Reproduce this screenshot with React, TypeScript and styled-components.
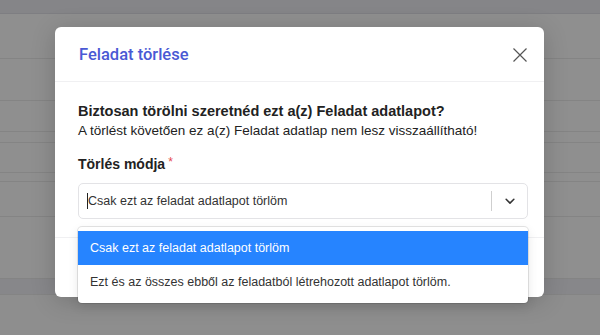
import React from 'react';
import styled, { createGlobalStyle } from 'styled-components';

const GlobalStyle = createGlobalStyle`
  html, body {
    margin: 0;
    padding: 0;
    width: 600px;
    height: 335px;
    overflow: hidden;
    background: #8e8e8e;
  }
  * {
    box-sizing: border-box;
  }
`;

// Background (dimmed table behind the modal)
const Page = styled.div`
  position: relative;
  width: 600px;
  height: 335px;
  font-family: 'Liberation Sans', Arial, sans-serif;
  background: #8e8e8e;
  overflow: hidden;
`;

const TopBar = styled.div`
  height: 14px;
  background: #858588;
  border-bottom: 1px solid #7e7e82;
`;

const Row = styled.div<{ $h: number; $dark?: boolean }>`
  height: ${(p) => p.$h}px;
  background: ${(p) => (p.$dark ? '#87878a' : '#8f8f8f')};
  border-bottom: 1px solid #848484;
`;

// Modal
const Overlay = styled.div`
  position: absolute;
  inset: 0;
  display: flex;
  justify-content: center;
  align-items: flex-start;
  padding-top: 27px;
`;

const Modal = styled.div`
  width: 489px;
  height: 270px;
  margin-left: -1px;
  background: #fff;
  border-radius: 6px;
  box-shadow: 0 4px 24px rgba(0, 0, 0, 0.18);
  display: flex;
  flex-direction: column;
`;

const Header = styled.div`
  height: 55px;
  padding: 1px 16px 0 24px;
  display: flex;
  align-items: center;
  justify-content: space-between;
  border-bottom: 1px solid #f0f0f2;
`;

const Title = styled.h2`
  margin: 0;
  font-family: Roboto, 'Liberation Sans', Arial, sans-serif;
  font-size: 16.5px;
  font-weight: 500;
  color: #4a59d4;
`;

const CloseButton = styled.button`
  width: 16px;
  height: 16px;
  padding: 0;
  border: none;
  background: none;
  display: flex;
  align-items: center;
  justify-content: center;
  cursor: pointer;
`;

const Body = styled.div`
  padding: 19px 16px 18px 23px;
  color: #222;
  font-size: 13.5px;
  line-height: 20px;
`;

const Question = styled.div`
  font-size: 14.5px;
  font-weight: 700;
`;

const Label = styled.div`
  margin-top: 11px;
  font-size: 14px;
  font-weight: 700;
`;

const Required = styled.span`
  color: #e5484d;
  font-weight: 400;
  font-size: 12px;
  vertical-align: 3px;
  margin-left: 3px;
`;

const SelectWrap = styled.div`
  position: relative;
  margin-top: 9px;
`;

const Control = styled.div`
  height: 36px;
  border: 1px solid #e3e3e6;
  border-radius: 5px;
  display: flex;
  align-items: center;
  font-size: 12.5px;
  color: #333;
`;

const Value = styled.div`
  flex: 1;
  padding-left: 8px;
  display: flex;
  align-items: center;
`;

const Caret = styled.span`
  display: inline-block;
  width: 1px;
  height: 16px;
  background: #222;
`;

const Separator = styled.span`
  width: 1px;
  height: 20px;
  background: #cfcfcf;
`;

const Indicator = styled.div`
  width: 35px;
  display: flex;
  align-items: center;
  justify-content: center;
`;

const Menu = styled.div`
  position: absolute;
  top: 44px;
  left: 0;
  right: 0;
  padding: 4px 0;
  background: #fff;
  border-radius: 4px;
  box-shadow: 0 0 0 1px rgba(0, 0, 0, 0.1), 0 4px 11px rgba(0, 0, 0, 0.1);
  z-index: 2;
`;

const Option = styled.div<{ $selected?: boolean }>`
  padding: 8px 12px;
  font-size: 12.5px;
  line-height: 18px;
  color: ${(p) => (p.$selected ? '#fff' : '#333')};
  background: ${(p) => (p.$selected ? '#2684ff' : '#fff')};
`;

const Footer = styled.div`
  flex: 1;
  border-top: 1px solid #f0f0f2;
  padding: 0 24px;
  display: flex;
  align-items: center;
  justify-content: flex-end;
  gap: 8px;
`;

const FooterButton = styled.button<{ $primary?: boolean }>`
  height: 32px;
  padding: 0 14px;
  border-radius: 4px;
  font-family: inherit;
  font-size: 13px;
  border: 1px solid ${(p) => (p.$primary ? '#e5484d' : '#d0d0d0')};
  background: ${(p) => (p.$primary ? '#e5484d' : '#fff')};
  color: ${(p) => (p.$primary ? '#fff' : '#333')};
`;

const rows = [45, 42, 31, 11, 30, 9, 35, 62];

const App: React.FC = () => {
  return (
    <Page>
      <GlobalStyle />
      <TopBar />
      {rows.map((h, i) => (
        <Row key={i} $h={h} />
      ))}
      <Row $h={16} $dark />

      <Overlay>
        <Modal>
          <Header>
            <Title>Feladat törlése</Title>
            <CloseButton aria-label="Bezárás">
              <svg width="14" height="14" viewBox="0 0 14 14">
                <path d="M0.5 0.5L13.5 13.5M13.5 0.5L0.5 13.5" stroke="#555" strokeWidth="1.2" fill="none" />
              </svg>
            </CloseButton>
          </Header>
          <Body>
            <Question>Biztosan törölni szeretnéd ezt a(z) Feladat adatlapot?</Question>
            <div>A törlést követően ez a(z) Feladat adatlap nem lesz visszaállítható!</div>
            <Label>
              Törlés módja<Required>*</Required>
            </Label>
            <SelectWrap>
              <Control>
                <Value>
                  <Caret />
                  Csak ezt az feladat adatlapot törlöm
                </Value>
                <Separator />
                <Indicator>
                  <svg width="14" height="14" viewBox="0 0 20 20">
                    <path
                      d="M4.5 7.5L10 13L15.5 7.5"
                      stroke="#333"
                      strokeWidth="2.2"
                      fill="none"
                      strokeLinecap="round"
                      strokeLinejoin="round"
                    />
                  </svg>
                </Indicator>
              </Control>
              <Menu>
                <Option $selected>Csak ezt az feladat adatlapot törlöm</Option>
                <Option>Ezt és az összes ebből az feladatból létrehozott adatlapot törlöm.</Option>
              </Menu>
            </SelectWrap>
          </Body>
          <Footer>
            <FooterButton>Mégse</FooterButton>
            <FooterButton $primary>Törlés</FooterButton>
          </Footer>
        </Modal>
      </Overlay>
    </Page>
  );
};

export default App;
